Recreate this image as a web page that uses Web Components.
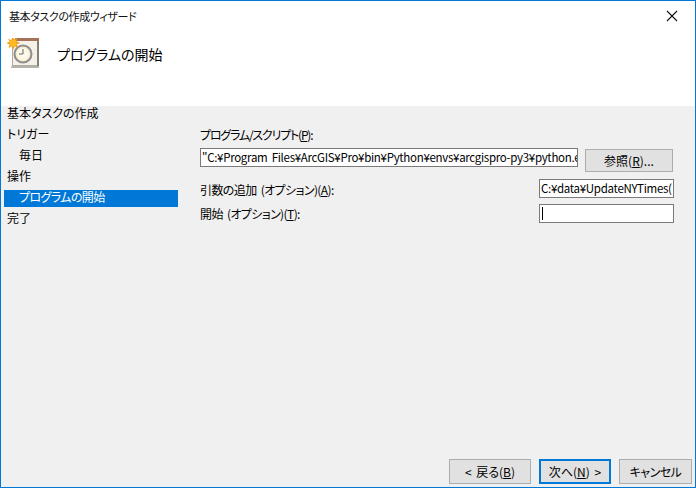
<!DOCTYPE html>
<html lang="ja">
<head>
<meta charset="utf-8">
<title>基本タスクの作成ウィザード</title>
<style>
	html, body { margin: 0; padding: 0; background: #f0f0f0; }
	body { font: 12px "Noto Sans CJK JP", "Noto Sans", sans-serif; color: #000; font-feature-settings: "palt"; }
</style>
</head>
<body>
<task-wizard>
	<wizard-title slot="title">基本タスクの作成ウィザード</wizard-title>
	<wizard-header slot="header">プログラムの開始</wizard-header>
	<wizard-step slot="steps">基本タスクの作成</wizard-step>
	<wizard-step slot="steps">トリガー</wizard-step>
	<wizard-step slot="steps" sub>毎日</wizard-step>
	<wizard-step slot="steps">操作</wizard-step>
	<wizard-step slot="steps" sub selected>プログラムの開始</wizard-step>
	<wizard-step slot="steps">完了</wizard-step>

	<form-label style="margin-top:20px;height:22px;letter-spacing:-1.2px;line-height:17px">プログラム/スクリプト(<u>P</u>):</form-label>
	<form-row style="height:24px;margin-bottom:7px">
		<text-box style="width:378px">"C:¥Program Files¥ArcGIS¥Pro¥bin¥Python¥envs¥arcgispro-py3¥python.e</text-box>
		<win-button style="width:88px;height:23px;margin:1px 0 0 7px">参照(<u>R</u>)...</win-button>
	</form-row>
	<form-row style="height:20px;margin-bottom:5px">
		<form-label style="line-height:21px">引数の追加 (オプション)(<u>A</u>):</form-label>
		<text-box style="width:135px;margin-left:auto">C:¥data¥UpdateNYTimes(</text-box>
	</form-row>
	<form-row style="height:19px">
		<form-label>開始 (オプション)(<u>T</u>):</form-label>
		<text-box style="width:135px;margin-left:auto" caret></text-box>
	</form-row>

	<win-button slot="footer" style="width:82px">&lt; 戻る(<u>B</u>)</win-button>
	<win-button slot="footer" style="width:72px" primary>次へ(<u>N</u>) &gt;</win-button>
	<win-button slot="footer" style="width:73px;letter-spacing:-0.5px">キャンセル</win-button>
</task-wizard>

<script>
(function () {
	function define(name, css, html) {
		const tpl = document.createElement('template');
		tpl.innerHTML = '<style>' + css + '</style>' + html;
		customElements.define(name, class extends HTMLElement {
			constructor() {
				super();
				this.attachShadow({mode: 'open'});
				this.shadowRoot.appendChild(tpl.content.cloneNode(true));
			}
		});
	}

	define('task-wizard', `
		:host {
			display: flex;
			flex-direction: column;
			box-sizing: border-box;
			width: 696px;
			height: 488px;
			border: 1px solid #0078d7;
			background: #f0f0f0;
			overflow: hidden;
		}
		#top { background: #fff; flex: none; }
		#body { flex: 1; display: flex; min-height: 0; }
		#steps { flex: none; width: 199px; box-sizing: border-box; padding-left: 3px; padding-right: 22px; display: flex; flex-direction: column; gap: 4px; }
		#form { flex: 1; display: flex; flex-direction: column; padding-right: 21px; }
		#footer { flex: none; height: 25px; margin: 0 3px 3px 0; display: flex; justify-content: flex-end; gap: 8px; }
	`, `
		<div id="top"><slot name="title"></slot><slot name="header"></slot></div>
		<div id="body">
			<div id="steps"><slot name="steps"></slot></div>
			<div id="form"><slot></slot></div>
		</div>
		<div id="footer"><slot name="footer"></slot></div>
	`);

	define('wizard-title', `
		:host { display: flex; height: 29px; align-items: center; justify-content: space-between; padding: 0 0 0 8px; font-size: 11px; letter-spacing: -0.4px; color: #111; }
		svg { display: block; margin: 0 17px 0 0; }
	`, `
		<span><slot></slot></span>
		<svg width="12" height="12" viewBox="0 0 12 12"><path d="M1 1L11 11M11 1L1 11" stroke="#111" stroke-width="1.1" fill="none"/></svg>
	`);

	define('wizard-header', `
		:host { display: flex; height: 76px; box-sizing: border-box; padding: 8px 0 0 6px; }
		svg { flex: none; display: block; }
		h1 { margin: 6px 0 0 18px; font-weight: 400; font-size: 14px; line-height: 20px; }
	`, `
		<svg width="32" height="32" viewBox="0 0 32 32">
			<path d="M5 27l-1 3h28v-3z" fill="#b5b2ac"/>
			<rect x="5.500" y="1.500" width="25" height="26" fill="#f5f1e8" stroke="#b0aca3"/>
			<rect x="8" y="0" width="24" height="3" fill="#a5735a"/>
			<rect x="30" y="3" width="2" height="25" fill="#84817b"/>
			<circle cx="16" cy="16" r="8.500" fill="#f7ebcb" stroke="#8e8e8e" stroke-width="2"/>
			<circle cx="16" cy="16" r="6" fill="#fcf8ea"/>
			<path d="M16 11V16H12" stroke="#666" stroke-width="1" fill="none"/>
			<path d="M6 -2l1.200 3.500 3.300-1.700-1.200 3.500L13 5l-3.500 1.200 1.700 3.300-3.500-1.200L6 12l-1.200-3.700-3.300 1.700 1.200-3.500L-1 5l3.700-1.200-1.700-3.300 3.300 1.700z" fill="#f39c12"/>
			<circle cx="6" cy="5" r="3.500" fill="#ffb81f"/>
		</svg>
		<h1><slot></slot></h1>
	`);

	define('wizard-step', `
		:host { display: block; height: 17px; line-height: 13px; padding-left: 3px; font-size: 12px; white-space: nowrap; }
		:host([sub]) { padding-left: 15px; }
		:host([selected]) { background: #0078d7; color: #fff; letter-spacing: -0.6px; }
	`, `<slot></slot>`);

	define('form-label', `
		:host { display: block; line-height: 19px; font-size: 12px; white-space: nowrap; word-spacing: 2px; letter-spacing: -0.6px; }
	`, `<slot></slot>`);

	define('form-row', `
		:host { display: flex; align-items: flex-start; flex: none; }
	`, `<slot></slot>`);

	define('text-box', `
		:host { display: block; flex: none; box-sizing: border-box; height: 19px; border: 1px solid #7a7a7a; background: #fff; padding: 0 0 0 1px; font-size: 11.5px; line-height: 16px; white-space: nowrap; overflow: hidden; word-spacing: 2px; letter-spacing: -0.3px; }
		#caret { display: none; width: 1px; height: 13px; background: #000; margin: 2px 0 0 1px; }
		:host([caret]) #caret { display: block; }
	`, `<div id="caret"></div><slot></slot>`);

	define('win-button', `
		:host { display: flex; flex: none; box-sizing: border-box; height: 25px; align-items: center; justify-content: center; border: 1px solid #adadad; background: #e1e1e1; font-size: 12px; white-space: nowrap; word-spacing: 2px; }
		:host([primary]) { border: 2px solid #0078d7; }
		span { display: block; }
	`, `<span><slot></slot></span>`);
})();
</script>
</body>
</html>
